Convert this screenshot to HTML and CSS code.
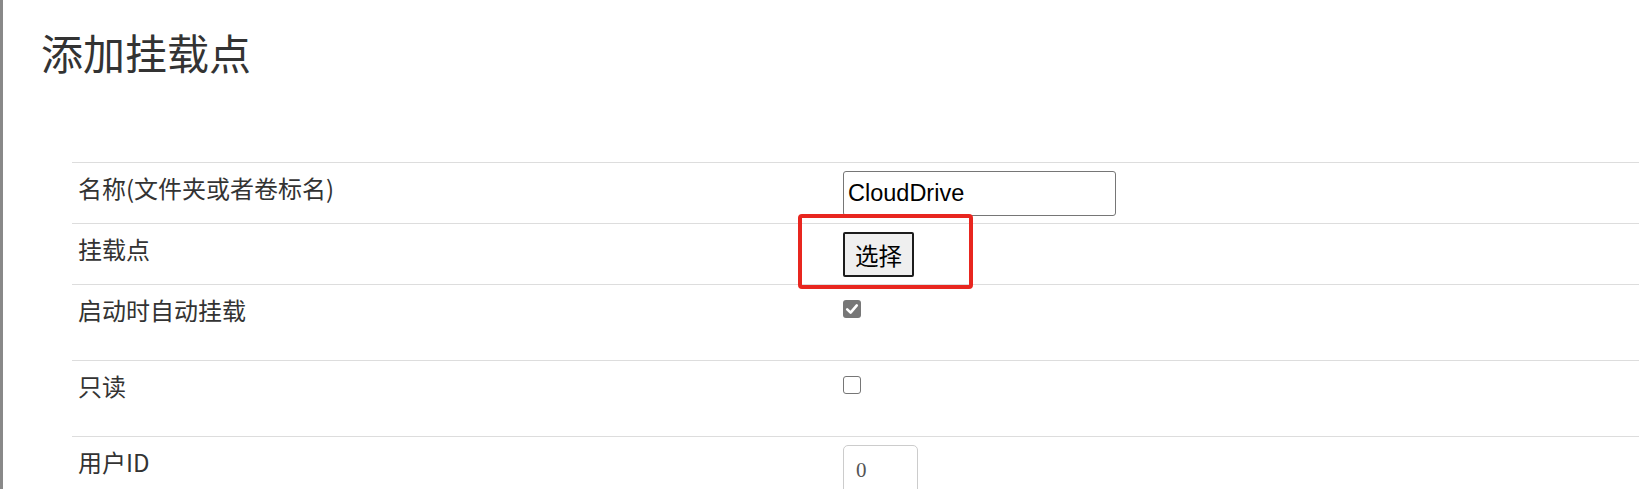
FILE: index.html
```html
<!DOCTYPE html>
<html lang="zh-CN">
<head>
<meta charset="utf-8">
<title>添加挂载点</title>
<link rel="stylesheet" href="styles.css">
</head>
<body>
<div class="page">
  <h1 class="title">添加挂载点</h1>
  <div class="form">
    <div class="row">
      <div class="cell label">名称(文件夹或者卷标名)</div>
      <div class="cell value"><input class="text-input" type="text" value="CloudDrive"></div>
    </div>
    <div class="row">
      <div class="cell label">挂载点</div>
      <div class="cell value">
        <button class="pick-btn" type="button">选择</button>
        <div class="highlight"></div>
      </div>
    </div>
    <div class="row">
      <div class="cell label">启动时自动挂载</div>
      <div class="cell value check-cell">
        <span class="check checked"><svg viewBox="0 0 18 18" width="18" height="18"><path d="M4.2 9.4 L7.6 12.6 L13.8 5.4" fill="none" stroke="#fff" stroke-width="2.6" stroke-linecap="round" stroke-linejoin="round"/></svg></span>
      </div>
    </div>
    <div class="row">
      <div class="cell label">只读</div>
      <div class="cell value check-cell">
        <span class="check"></span>
      </div>
    </div>
    <div class="row">
      <div class="cell label">用户ID</div>
      <div class="cell value"><input class="num-input" type="text" value="0"></div>
    </div>
  </div>
</div>
</body>
</html>
```

FILE: styles.css
```css
html, body {
  margin: 0;
  padding: 0;
  background: #fff;
}

body {
  font-family: "Noto Sans CJK SC", "Liberation Sans", sans-serif;
  color: #333;
  overflow: hidden;
}

.page {
  border-left: 3px solid #898989;
  min-height: 100vh;
  padding: 29px 0 0 38px;
  box-sizing: border-box;
}

.title {
  margin: 0;
  font-size: 42px;
  font-weight: 400;
  line-height: 46px;
  color: #333;
}

.form {
  margin: 87px 0 0 31px;
}

.row {
  display: grid;
  grid-template-columns: 765px 1fr;
  border-top: 1px solid #dddddd;
}

.cell {
  padding: 8px 6px 7px;
  font-size: 24px;
  line-height: 34px;
}

.value {
  position: relative;
}

.text-input {
  display: block;
  box-sizing: border-box;
  width: 273px;
  height: 45px;
  margin: 0;
  padding: 0 4px;
  border: 1px solid #767676;
  border-radius: 3px;
  font-family: "Liberation Sans", Arial, sans-serif;
  font-size: 23.5px;
  color: #000;
  background: #fff;
}

.pick-btn {
  display: block;
  box-sizing: border-box;
  width: 71px;
  height: 45px;
  margin: 0;
  padding: 0;
  border: 2px solid #1c1c1c;
  border-radius: 2px;
  background: #efefef;
  font-family: "Noto Sans CJK SC", sans-serif;
  font-size: 23.5px;
  color: #000;
}

.highlight {
  position: absolute;
  left: -39px;
  top: -10px;
  width: 175px;
  height: 75px;
  box-sizing: border-box;
  border: 4px solid #e8261f;
  border-radius: 4px;
  pointer-events: none;
}

.check-cell {
  height: 60px;
  box-sizing: content-box;
}

.check {
  display: block;
  box-sizing: border-box;
  width: 18px;
  height: 18px;
  margin-top: 7px;
  border: 1.5px solid #767676;
  border-radius: 3px;
  background: #fff;
}

.check.checked {
  border: none;
  background: #777777;
}

.check svg {
  display: block;
}

.num-input {
  display: block;
  box-sizing: border-box;
  width: 75px;
  height: 50px;
  margin: 0;
  padding: 0 12px;
  border: 1px solid #cccccc;
  border-radius: 5px;
  font-family: "Liberation Serif", "Times New Roman", serif;
  font-size: 21px;
  color: #555;
  background: #fff;
}
```
